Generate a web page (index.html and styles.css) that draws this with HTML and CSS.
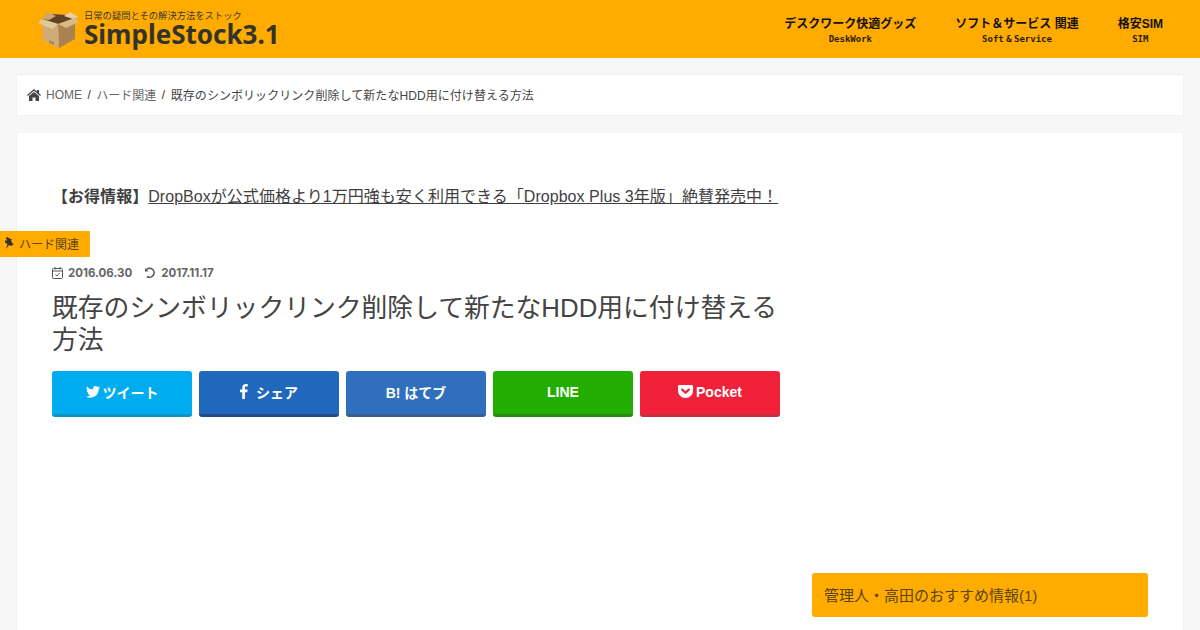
FILE: index.html

```html
<!DOCTYPE html>
<html lang="ja">
<head>
    <meta charset="UTF-8">
    <meta name="viewport" content="width=device-width, initial-scale=1.0">
    <title>既存のシンボリックリンク削除して新たなHDD用に付け替える方法</title>
    <link rel="stylesheet" href="styles.css">
</head>
<body>
    <header class="site-header">
        <a class="logo" href="#">
            <svg class="logo-box" width="41" height="38" viewBox="0 0 41 38">
                <path d="M20 13 L37 7 L37 28 L21 37 Z" fill="#a9824f"/>
                <path d="M20 13 L4 8 L5 29 L21 37 Z" fill="#cfab78"/>
                <path d="M4 8 L14 3 L29 4 L37 7 L20 13 Z" fill="#5f4425"/>
                <path d="M4 8 L0 12 L14 18 L20 13 Z" fill="#e2c899"/>
                <path d="M4 8 L10 1 L18 5 L11 9 Z" fill="#c9a873"/>
                <path d="M37 7 L41 11 L28 17 L20 13 Z" fill="#d8bb89"/>
                <path d="M26 5 L32 1 L40 6 L35 8 Z" fill="#e6cfa4"/>
                <path d="M11 29 L16 31 L16 34 L11 32 Z" fill="#a98a5c"/>
            </svg>
            <span class="logo-text">
                <span class="logo-tag">日常の疑問とその解決方法をストック</span>
                <span class="logo-name">SimpleStock3.1</span>
            </span>
        </a>
        <nav class="main-nav">
            <a href="#">デスクワーク快適グッズ<small>DeskWork</small></a>
            <a href="#">ソフト＆サービス 関連<small>Soft &amp; Service</small></a>
            <a href="#">格安SIM<small>SIM</small></a>
        </nav>
    </header>

    <div class="breadcrumb">
        <svg class="home-icon" width="14" height="12" viewBox="0 0 14 12">
            <path d="M7 0 L10 2.6 V1 H12 V4.3 L14 6 L13.2 6.9 L7 1.7 L.8 6.9 L0 6 Z M2 7 L7 2.9 L12 7 V12 H8.5 V8.5 H5.5 V12 H2 Z" fill="#444"/>
        </svg>
        <a href="#">HOME</a><span class="sep">/</span>
        <a href="#">ハード関連</a><span class="sep">/</span>
        <span class="current">既存のシンボリックリンク削除して新たなHDD用に付け替える方法</span>
    </div>

    <div class="content-card">
        <div class="cat-label">
            <svg width="11" height="12" viewBox="0 0 11 12">
                <path d="M2.5 0 L8 2.5 L7 3.5 L8.5 6.5 L10 7 L7 9 L5 8 L2 12 L3.5 7 L1 5.5 L1 3.5 L3 3.5 L2 1 Z" fill="#333"/>
            </svg>
            ハード関連
        </div>
        <main class="article">
            <p class="promo"><strong>【お得情報】</strong><a href="#">DropBoxが公式価格より1万円強も安く利用できる「Dropbox Plus 3年版」絶賛発売中！</a></p>
            <div class="dates">
                <svg width="11" height="12" viewBox="0 0 11 12" fill="none" stroke="#555">
                    <rect x=".5" y="1.5" width="10" height="10" rx="1"/>
                    <path d="M.5 4 H10.5 M3 0 V2.5 M8 0 V2.5 M3.5 7.5 L5 9 L7.5 6"/>
                </svg>
                <span class="date">2016.06.30</span>
                <svg class="undo" width="12" height="12" viewBox="0 0 12 12" fill="none" stroke="#555" stroke-width="1.6">
                    <path d="M2.5 2.5 A4.5 4.5 0 1 1 3 9.5"/>
                    <path d="M1 1 V4.5 H4.5" stroke="none" fill="#555"/>
                </svg>
                <span class="date">2017.11.17</span>
            </div>
            <h1 class="entry-title">既存のシンボリックリンク削除して新たなHDD用に付け替える方法</h1>
            <div class="share">
                <a class="btn twitter" href="#">
                    <svg width="14" height="12" viewBox="0 0 14 12"><path d="M14 1.4 C13.5 1.7 12.9 1.8 12.3 1.9 C12.9 1.5 13.4 1 13.6 .3 C13 .6 12.4 .9 11.7 1 C10.5 -.3 8.5 -.3 7.5 1 C6.9 1.7 6.7 2.7 6.9 3.6 C4.6 3.5 2.4 2.4 1 .6 C.2 1.9 .6 3.7 1.9 4.6 C1.4 4.6 1 4.4 .6 4.2 C.6 5.6 1.6 6.8 2.9 7.1 C2.5 7.2 2 7.2 1.6 7.1 C2 8.3 3.1 9.1 4.3 9.2 C3 10.2 1.5 10.7 0 10.5 C4.1 13 9.5 11.6 11.6 7.6 C12.3 6.3 12.6 4.9 12.6 3.4 C13.2 2.9 13.6 2.2 14 1.4 Z" fill="#fff"/></svg>
                    ツイート
                </a>
                <a class="btn facebook" href="#">
                    <svg class="fb" width="8" height="15" viewBox="0 0 8 15"><path d="M2.3 15 V8.2 H0 V5.5 H2.3 V3.6 C2.3 1.3 3.7 0 5.7 0 C6.6 0 7.4 .1 7.7 .1 V2.5 H6.2 C5.1 2.5 4.9 3 4.9 3.8 V5.5 H7.6 L7.2 8.2 H4.9 V15 Z" fill="#fff"/></svg>
                    シェア
                </a>
                <a class="btn hatena" href="#">B! はてブ</a>
                <a class="btn line" href="#">LINE</a>
                <a class="btn pocket" href="#">
                    <svg width="15" height="13" viewBox="0 0 15 13"><path d="M1.4 0 H13.6 C14.4 0 15 .6 15 1.4 V5.5 C15 9.6 11.7 13 7.5 13 C3.3 13 0 9.6 0 5.5 V1.4 C0 .6 .6 0 1.4 0 Z" fill="#fff"/><path d="M4.2 4.6 L7.5 7.8 L10.8 4.6" fill="none" stroke="#f1213a" stroke-width="2.2" stroke-linecap="round" stroke-linejoin="round"/></svg>
                    Pocket
                </a>
            </div>
        </main>
        <aside class="sidebar">
            <h3 class="widget-title">管理人・高田のおすすめ情報(1)</h3>
        </aside>
    </div>
</body>
</html>
```

FILE: styles.css

```css
:root {
    --main-orange: #ffab00;
    --text: #3f3f3f;
}
* { box-sizing: border-box; }
html, body { height: 630px; overflow: hidden; }
body {
    margin: 0;
    background: #f7f7f7;
    color: var(--text);
    font-family: "Liberation Sans", "Noto Sans CJK JP", sans-serif;
}
a { color: inherit; text-decoration: none; }

.site-header {
    height: 58px;
    background: var(--main-orange);
    display: flex;
    justify-content: space-between;
    padding: 0 37px 0 38px;
}
.logo {
    display: flex;
    align-items: center;
    gap: 5px;
    padding-top: 2px;
}
.logo-text { display: flex; flex-direction: column; margin-top: -2px; }
.logo-tag {
    font-size: 9.3px;
    line-height: 10px;
    color: #3a3a30;
}
.logo-name {
    font-family: "Noto Sans", sans-serif;
    font-weight: 700;
    font-size: 26px;
    line-height: 26px;
    color: #33332c;
}
.main-nav { display: flex; gap: 39px; padding-top: 16px; }
.main-nav a {
    font-size: 12px;
    font-weight: 700;
    line-height: 16px;
    color: #111;
    text-align: center;
}
.main-nav small {
    display: block;
    font-family: "DejaVu Sans Mono", monospace;
    font-size: 9px;
    line-height: 14px;
    word-spacing: -3px;
    color: #2a1d00;
}

.breadcrumb {
    margin: 16px 16px 0;
    height: 42px;
    background: #fff;
    border: 1px solid #f1f1f1;
    padding: 0 10px 1px;
    display: flex;
    align-items: center;
    font-size: 12px;
    color: #666;
}
.home-icon { margin-right: 5px; }
.sep { margin: 0 5.5px; color: #333; }
.current { color: #444; letter-spacing: .06px; }

.content-card {
    position: relative;
    margin: 16px 16px 0;
    height: 520px;
    background: #fff;
    border: 1px solid #f3f3f3;
    padding: 0 35px;
    display: flex;
    gap: 32px;
}
.cat-label {
    position: absolute;
    left: -17px;
    top: 98px;
    width: 90px;
    height: 26px;
    background: var(--main-orange);
    display: flex;
    align-items: center;
    gap: 4px;
    padding: 0 0 2px 4px;
    font-size: 12px;
    color: #5a4514;
}
.article { width: 728px; padding-top: 53px; }
.promo { margin: 0; font-size: 16px; line-height: 22px; letter-spacing: .04px; }
.promo a { text-decoration: underline; }
.dates {
    margin-top: 57px;
    display: flex;
    align-items: center;
    height: 16px;
    color: #666;
}
.date {
    font-family: "Inter", sans-serif;
    font-size: 11.5px;
    font-weight: 700;
    margin-left: 5px;
}
.undo { margin-left: 12px; }
.entry-title {
    margin: 11px 0 0;
    font-size: 25.8px;
    font-weight: 400;
    line-height: 32px;
    color: #444;
}
.share { margin-top: 15px; display: flex; gap: 7px; }
.btn {
    width: 140px;
    height: 46px;
    padding-bottom: 2px;
    border-radius: 3px;
    color: #fff;
    font-size: 14px;
    font-weight: 700;
    display: flex;
    align-items: center;
    justify-content: center;
    gap: 3px;
}
.twitter { background: #00acf0; border-bottom: 3px solid #0f92c8; }
.facebook { background: #1f68bb; border-bottom: 3px solid #254a87; gap: 8px; }
.hatena { background: #2f6fbd; border-bottom: 3px solid #3c5d91; }
.line { background: #22ae00; border-bottom: 3px solid #2b8a12; }
.pocket { background: #f1213a; border-bottom: 3px solid #c72d3e; }

.sidebar { width: 336px; padding-top: 440px; }
.widget-title {
    margin: 0;
    height: 44px;
    padding: 0 12px 2px;
    background: var(--main-orange);
    border-radius: 3px;
    display: flex;
    align-items: center;
    font-size: 15px;
    font-weight: 400;
    color: #5a4514;
}
```
